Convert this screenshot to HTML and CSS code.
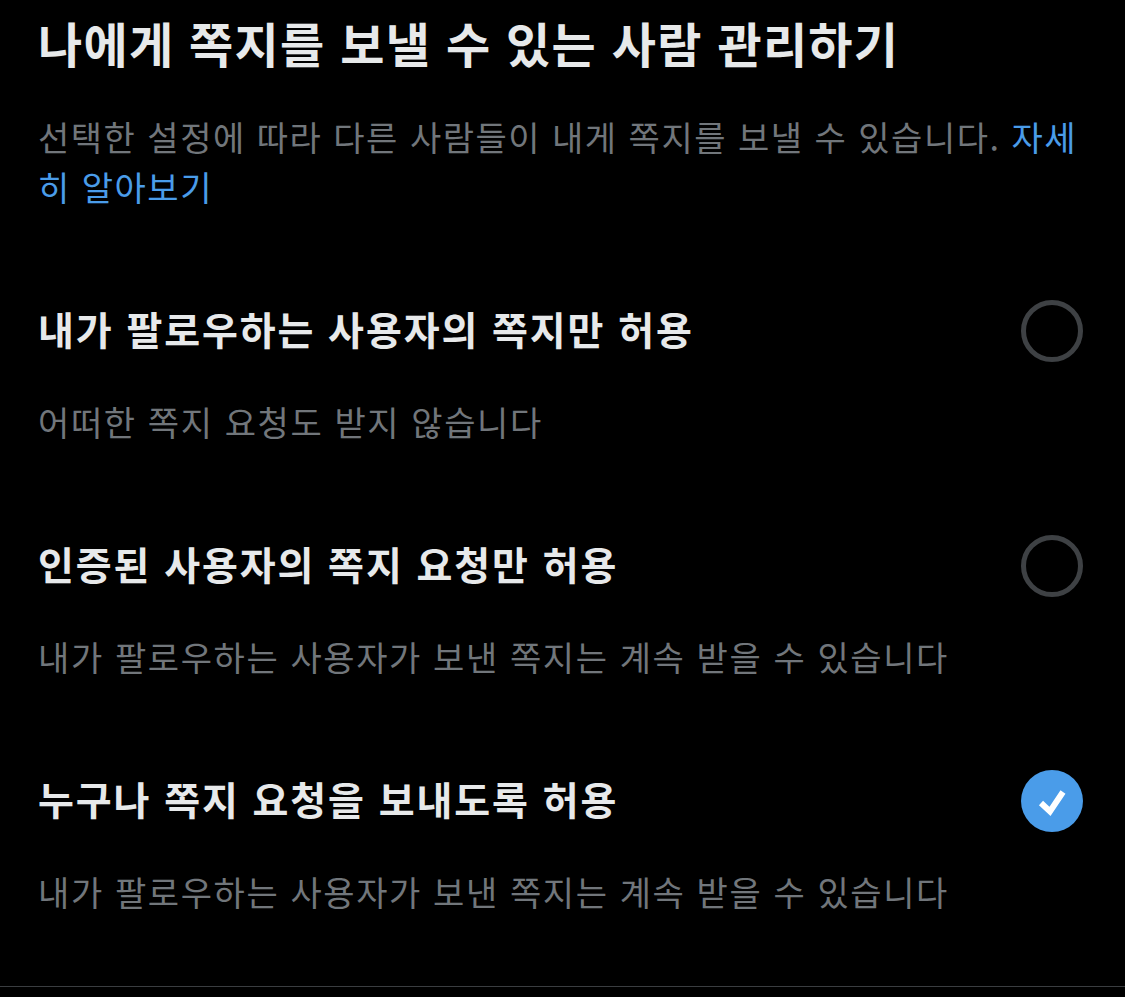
FILE: index.html
```html
<!DOCTYPE html>
<html lang="ko">
<head>
  <meta charset="UTF-8">
  <meta name="viewport" content="width=device-width, initial-scale=1.0">
  <title>쪽지 설정</title>
  <link rel="stylesheet" href="styles.css">
</head>
<body>
  <div class="page">
    <h1 class="title">나에게 쪽지를 보낼 수 있는 사람 관리하기</h1>
    <p class="intro">선택한 설정에 따라 다른 사람들이 내게 쪽지를 보낼 수 있습니다. <a class="more" href="#">자세히 알아보기</a></p>

    <div class="option">
      <div class="option-row">
        <span class="option-label">내가 팔로우하는 사용자의 쪽지만 허용</span>
        <span class="radio"></span>
      </div>
      <p class="option-desc">어떠한 쪽지 요청도 받지 않습니다</p>
    </div>

    <div class="option">
      <div class="option-row">
        <span class="option-label">인증된 사용자의 쪽지 요청만 허용</span>
        <span class="radio"></span>
      </div>
      <p class="option-desc">내가 팔로우하는 사용자가 보낸 쪽지는 계속 받을 수 있습니다</p>
    </div>

    <div class="option last">
      <div class="option-row">
        <span class="option-label">누구나 쪽지 요청을 보내도록 허용</span>
        <span class="radio checked">
          <svg viewBox="0 0 62 62" width="62" height="62">
            <polyline points="20,33 29,41.5 42,22" fill="none" stroke="#fff" stroke-width="6"/>
          </svg>
        </span>
      </div>
      <p class="option-desc">내가 팔로우하는 사용자가 보낸 쪽지는 계속 받을 수 있습니다</p>
    </div>
  </div>
</body>
</html>
```

FILE: styles.css
```css
body {
  margin: 0;
  background-color: #000;
  font-family: "Noto Sans CJK KR", "Noto Sans", sans-serif;
  color: #e7e9ea;
}

.page {
  padding: 0 42px 0 38px;
  border-bottom: 1px solid #3a3d40;
}

.title {
  margin: 12px 0 0;
  font-size: 48px;
  line-height: 60px;
  font-weight: 700;
  letter-spacing: 1.3px;
}

.intro {
  margin: 40px -10px 0 0;
  font-size: 34px;
  line-height: 50px;
  letter-spacing: 1.5px;
  color: #71767b;
}

.more {
  color: #4a9ce9;
  text-decoration: none;
}

.option {
  padding-top: 87px;
}

.option.last {
  padding-bottom: 69px;
}

.option-row {
  display: flex;
  align-items: center;
  justify-content: space-between;
  height: 64px;
}

.option-label {
  padding-bottom: 6px;
  font-size: 39px;
  font-weight: 700;
  letter-spacing: 1.9px;
}

.option-desc {
  margin: 34px 0 0;
  font-size: 34px;
  line-height: 50px;
  letter-spacing: 1.6px;
  color: #71767b;
}

.radio {
  box-sizing: border-box;
  width: 62px;
  height: 62px;
  border: 5px solid #3e4144;
  border-radius: 50%;
}

.radio.checked {
  border: none;
  background-color: #4a9ce9;
}

.radio svg {
  display: block;
}
```
